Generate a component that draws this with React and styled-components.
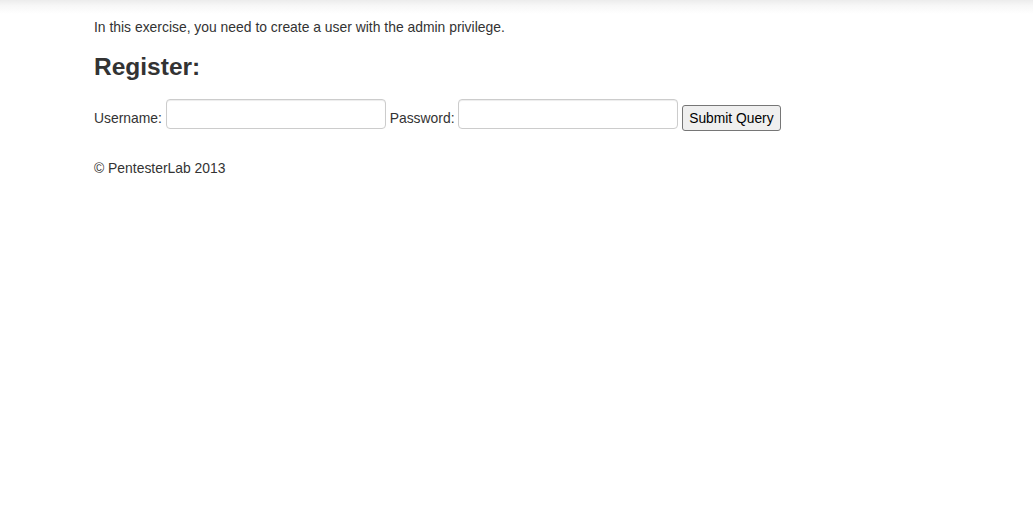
import React from 'react';
import styled, { createGlobalStyle } from 'styled-components';

const GlobalStyle = createGlobalStyle`
  html, body {
    margin: 0;
    padding: 0;
    background: #fff;
  }
  body {
    font-family: "Liberation Sans", Arial, Helvetica, sans-serif;
    font-size: 13.9px;
    line-height: 20px;
    color: #333;
  }
`;

const TopShade = styled.div`
  height: 14px;
  background: linear-gradient(to bottom, #ececec 0%, #f7f7f7 40%, #ffffff 100%);
`;

const Container = styled.div`
  width: 845px;
  margin: 0 auto;
  padding-top: 3px;
`;

const Intro = styled.p`
  margin: 0 0 10px;
`;

const Heading = styled.h2`
  margin: 10px 0 12px;
  font-size: 24.5px;
  line-height: 40px;
  font-weight: bold;
  color: #333;
`;

/* inline flow, like the original form: labels and button sit on the
   text baseline, inputs are middle-aligned with a bottom margin */
const Form = styled.form`
  margin: 0 0 19px;
  line-height: 20px;
  white-space: nowrap;
`;

const TextInput = styled.input`
  box-sizing: border-box;
  display: inline-block;
  width: 220px;
  height: 30px;
  padding: 4px 6px;
  margin: 0 0 10px;
  vertical-align: middle;
  font: 14px/20px "Liberation Sans", Arial, sans-serif;
  color: #555;
  background: #fff;
  border: 1px solid #ccc;
  border-radius: 4px;
  box-shadow: inset 0 1px 1px rgba(0, 0, 0, 0.075);
  outline: none;
`;

const SubmitButton = styled.button`
  box-sizing: border-box;
  height: 26px;
  padding: 1px 6px;
  margin: 0;
  font: 13.8px "Liberation Sans", Arial, sans-serif;
  color: #000;
  background: #efefef;
  border: 1px solid #767676;
  border-radius: 3px;
  white-space: nowrap;
`;

const Footer = styled.footer`
  margin: 0;
`;

export default function App() {
  return (
    <>
      <GlobalStyle />
      <TopShade />
      <Container>
        <Intro>In this exercise, you need to create a user with the admin privilege.</Intro>
        <Heading>Register:</Heading>
        <Form onSubmit={(e) => e.preventDefault()}>
          Username: <TextInput type="text" name="username" />{' '}
          Password: <TextInput type="password" name="password" />{' '}
          <SubmitButton type="submit">Submit Query</SubmitButton>
        </Form>
        <Footer>© PentesterLab 2013</Footer>
      </Container>
    </>
  );
}
